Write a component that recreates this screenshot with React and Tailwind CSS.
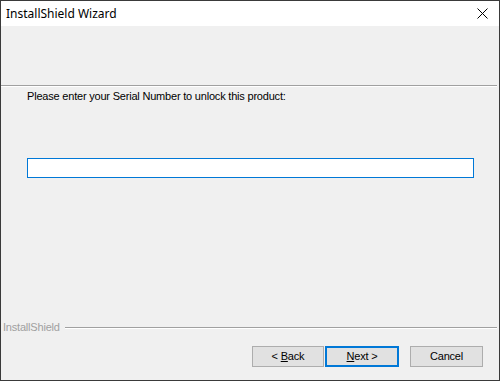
export default function App() {
  return (
    <div className="w-[500px] h-[381px] border border-[#3a3a3a] bg-[#f0f0f0] flex flex-col overflow-hidden">
      <div className="h-[25px] bg-white flex items-center justify-between pl-[5px] pr-[10px] shrink-0">
        <span className="text-[12px] text-black font-['Noto_Sans',sans-serif] leading-none">InstallShield Wizard</span>
        <svg width="11" height="11" viewBox="0 0 11 11" className="mr-[1px]">
          <path d="M0.5 0.5 L10.5 10.5 M10.5 0.5 L0.5 10.5" stroke="#000" strokeWidth="1" />
        </svg>
      </div>
      <div className="h-[59px] shrink-0" />
      <div className="h-px shrink-0 bg-[#a0a0a0] mr-[2px]" />
      <div className="h-px shrink-0 bg-white mr-[2px]" />
      <div className="flex-1 flex flex-col px-[26px] font-['Liberation_Sans',Arial,sans-serif] text-[11px] tracking-[-0.2px] text-black">
        <div className="mt-[3px] leading-[13px]">Please enter your Serial Number to unlock this product:</div>
        <div className="mt-[55px] h-[20px] w-[447px] bg-white border border-[#0078d7]" />
      </div>
      <div className="flex items-center pl-[2px] pr-[2px] h-[13px] shrink-0 mb-[12px] font-['Liberation_Sans',Arial,sans-serif] text-[11px] tracking-[-0.2px]">
        <span className="text-[#a0a0a0] leading-[13px]">InstallShield</span>
        <div className="flex-1 ml-[5px] mt-[1px] flex flex-col">
          <div className="h-px bg-[#a0a0a0]" />
          <div className="h-px bg-white" />
        </div>
      </div>
      <div className="flex justify-end pr-[16px] mb-[13px] shrink-0 font-['Liberation_Sans',Arial,sans-serif] text-[11px] tracking-[-0.2px] text-black">
        <div className="w-[72px] h-[21px] bg-[#e1e1e1] border border-[#adadad] flex items-center justify-center">
          <span>&lt; <u>B</u>ack</span>
        </div>
        <div className="w-[74px] h-[21px] ml-[1px] bg-[#e1e1e1] border-2 border-[#0078d7] flex items-center justify-center">
          <span><u>N</u>ext &gt;</span>
        </div>
        <div className="w-[73px] h-[21px] ml-[11px] bg-[#e1e1e1] border border-[#adadad] flex items-center justify-center">
          <span>Cancel</span>
        </div>
      </div>
    </div>
  );
}
